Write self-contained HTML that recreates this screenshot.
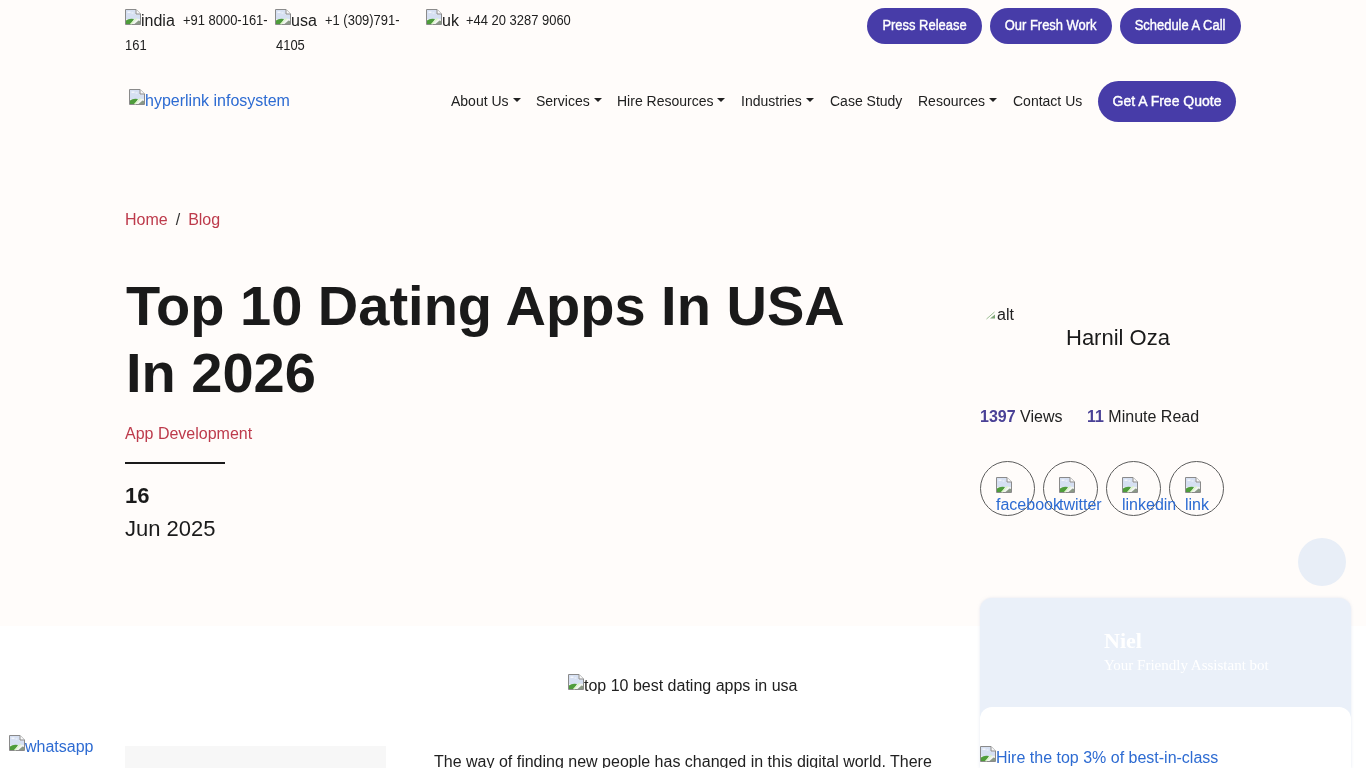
<!DOCTYPE html>
<html><head><meta charset="utf-8">
<style>
*{box-sizing:border-box;margin:0;padding:0}
html,body{width:1366px;height:768px;overflow:hidden}
body{font-family:"Liberation Sans",sans-serif;color:#212121;background:#fff;position:relative}
.wrap{position:absolute;left:0;top:0;width:1366px;height:768px;will-change:transform}
.hero{position:absolute;left:0;top:0;width:1366px;height:626px;background:#fffcfa}
.abs{position:absolute;white-space:nowrap}
.bi{display:inline-block;width:16px;height:16px;vertical-align:1px}
.lnk{color:#2d6bd2}
.btn{position:absolute;background:#473ca8;color:#fff;border-radius:18px;font-size:14px;-webkit-text-stroke:0.4px #fff;text-align:center;white-space:nowrap}
.sx{display:inline-block;transform:scaleX(0.925)}
.nav{position:absolute;top:93px;font-size:14px;color:#212121;white-space:nowrap}
.caret{display:inline-block;width:0;height:0;border-left:4px solid transparent;border-right:4px solid transparent;border-top:4px solid #212121;vertical-align:middle;margin-left:4px;margin-top:-3px;position:relative;top:-1px}
.red{color:#bd3a4b}
.circle{position:absolute;width:55px;height:55px;border:1px solid #5c5c5c;border-radius:50%}
</style></head>
<body>
<div class="wrap">
<div class="hero"></div>

<!-- top contacts -->
<svg width="0" height="0" style="position:absolute">
<defs>
<symbol id="bimg" viewBox="0 0 16 16">
<path d="M0.5 0.5H11L15.5 5V15.5H0.5Z" fill="#eef1f7" stroke="#8a8a8a" stroke-width="1"/>
<path d="M1 1H10.5V5.5H15V10H1Z" fill="#d6e0f2"/>
<path d="M2.5 2.5h3v1.5h-3z M6.5 3.5h2v1h-2z" fill="#f4f6fb"/>
<path d="M1 15V11.5Q4 9 9 10L6 15Z" fill="#4e9c3b"/>
<path d="M6.5 15L11.5 9.8L15 10V15Z" fill="#f2f4f2"/><path d="M9.5 15L13.5 11.5L15 12V15Z" fill="#8a9886"/>
<path d="M5.6 15.3L11.6 9.2" stroke="#dcf5c8" stroke-width="1.5"/>
<path d="M11 0.5V5H15.5" fill="#fafafa" stroke="#8a8a8a" stroke-width="1"/>
</symbol>
</defs>
</svg>

<div class="abs" style="left:125px;top:9px;font-size:16px;line-height:20px"><svg class="bi"><use href="#bimg"/></svg>india</div>
<div class="abs" style="left:183px;top:10px;font-size:14px;line-height:20px;transform:scaleX(0.925);transform-origin:0 0">+91 8000-161-</div>
<div class="abs" style="left:125px;top:35px;font-size:14px;line-height:20px;transform:scaleX(0.925);transform-origin:0 0">161</div>

<div class="abs" style="left:275px;top:9px;font-size:16px;line-height:20px"><svg class="bi"><use href="#bimg"/></svg>usa</div>
<div class="abs" style="left:325px;top:10px;font-size:14px;line-height:20px;transform:scaleX(0.925);transform-origin:0 0">+1 (309)791-</div>
<div class="abs" style="left:276px;top:35px;font-size:14px;line-height:20px;transform:scaleX(0.925);transform-origin:0 0">4105</div>

<div class="abs" style="left:426px;top:9px;font-size:16px;line-height:20px"><svg class="bi"><use href="#bimg"/></svg>uk</div>
<div class="abs" style="left:466px;top:10px;font-size:14px;line-height:20px;transform:scaleX(0.925);transform-origin:0 0">+44 20 3287 9060</div>

<div class="btn" style="left:867px;top:8px;width:115px;height:36px;line-height:34px"><span class="sx">Press Release</span></div>
<div class="btn" style="left:990px;top:8px;width:122px;height:36px;line-height:34px"><span class="sx">Our Fresh Work</span></div>
<div class="btn" style="left:1120px;top:8px;width:121px;height:36px;line-height:34px"><span class="sx">Schedule A Call</span></div>

<!-- nav -->
<div class="abs lnk" style="left:129px;top:89px;font-size:16px;line-height:20px"><svg class="bi"><use href="#bimg"/></svg>hyperlink infosystem</div>
<div class="nav" style="left:451px">About Us<span class="caret"></span></div>
<div class="nav" style="left:536px">Services<span class="caret"></span></div>
<div class="nav" style="left:617px">Hire Resources<span class="caret"></span></div>
<div class="nav" style="left:741px">Industries<span class="caret"></span></div>
<div class="nav" style="left:830px">Case Study</div>
<div class="nav" style="left:918px">Resources<span class="caret"></span></div>
<div class="nav" style="left:1013px">Contact Us</div>
<div class="btn" style="left:1098px;top:81px;width:138px;height:41px;line-height:41px;border-radius:21px;letter-spacing:0">Get A Free Quote</div>

<!-- breadcrumb -->
<div class="abs" style="left:125px;top:210px;font-size:16px;line-height:20px"><span class="red">Home</span><span style="color:#333;padding:0 8px">/</span><span class="red">Blog</span></div>

<!-- title -->
<div class="abs" style="left:126px;top:272px;font-size:56px;font-weight:bold;line-height:67px;color:#1a1a1a">Top 10 Dating Apps In USA<br>In 2026</div>
<div class="abs red" style="left:125px;top:424px;font-size:16px;line-height:20px">App Development</div>
<div class="abs" style="left:125px;top:462px;width:100px;height:2px;background:#1a1a1a"></div>
<div class="abs" style="left:125px;top:484px;font-size:22px;font-weight:bold;line-height:24px;color:#1a1a1a">16</div>
<div class="abs" style="left:125px;top:517px;font-size:22px;line-height:24px;color:#1a1a1a">Jun 2025</div>

<!-- author -->
<div class="abs" style="left:985px;top:305px;font-size:16px;line-height:20px"><svg style="width:12px;height:10px;vertical-align:baseline" viewBox="0 0 12 10"><path d="M1.5 9 L9.5 2" stroke="#9cbf94" stroke-width="1"/><path d="M5 8.5 L10 4.5 V8.5z" fill="#7fa678"/></svg>alt</div>
<div class="abs" style="left:1066px;top:326px;font-size:22px;line-height:24px;color:#1a1a1a">Harnil Oza</div>
<div class="abs" style="left:980px;top:407px;font-size:16px;line-height:20px"><b style="color:#4a4196">1397</b> Views</div>
<div class="abs" style="left:1087px;top:407px;font-size:16px;line-height:20px"><b style="color:#4a4196">11</b> Minute Read</div>

<div class="circle" style="left:980px;top:461px"></div>
<div class="circle" style="left:1043px;top:461px"></div>
<div class="circle" style="left:1106px;top:461px"></div>
<div class="circle" style="left:1169px;top:461px"></div>
<div class="abs lnk" style="left:996px;top:477px;font-size:16px;line-height:17px"><svg class="bi" style="vertical-align:baseline"><use href="#bimg"/></svg><br>facebook</div>
<div class="abs lnk" style="left:1059px;top:477px;font-size:16px;line-height:17px"><svg class="bi" style="vertical-align:baseline"><use href="#bimg"/></svg><br>twitter</div>
<div class="abs lnk" style="left:1122px;top:477px;font-size:16px;line-height:17px"><svg class="bi" style="vertical-align:baseline"><use href="#bimg"/></svg><br>linkedin</div>
<div class="abs lnk" style="left:1185px;top:477px;font-size:16px;line-height:17px"><svg class="bi" style="vertical-align:baseline"><use href="#bimg"/></svg><br>link</div>

<!-- scroll top -->
<div class="abs" style="left:1298px;top:538px;width:48px;height:48px;border-radius:50%;background:#e8eef7"></div>

<!-- chat widget -->
<div class="abs" style="left:980px;top:598px;width:371px;height:170px;border-radius:12px 12px 0 0;background:#eaf0f9;box-shadow:0 0 3px rgba(200,210,230,0.5)"></div>
<div class="abs" style="left:980px;top:707px;width:371px;height:61px;border-radius:12px 12px 0 0;background:#fff"></div>
<div class="abs" style="left:1104px;top:628px;font-family:'Liberation Serif',serif;font-size:22px;font-weight:bold;color:#fff">Niel</div>
<div class="abs" style="left:1104px;top:657px;font-family:'Liberation Serif',serif;font-size:15px;color:#fff">Your Friendly Assistant bot</div>

<!-- content -->
<div class="abs" style="left:568px;top:674px;font-size:16px;line-height:20px;color:#212121"><svg class="bi"><use href="#bimg"/></svg>top 10 best dating apps in usa</div>
<div class="abs lnk" style="left:9px;top:735px;font-size:16px;line-height:20px"><svg class="bi"><use href="#bimg"/></svg>whatsapp</div>
<div class="abs" style="left:125px;top:746px;width:261px;height:30px;background:#f7f7f7"></div>
<div class="abs" style="left:434px;top:752px;font-size:16px;line-height:20px;color:#212121">The way of finding new people has changed in this digital world. There</div>
<div class="abs lnk" style="left:980px;top:746px;font-size:16px;line-height:20px"><svg class="bi"><use href="#bimg"/></svg>Hire the top 3% of best-in-class</div>

</div>
</body></html>
